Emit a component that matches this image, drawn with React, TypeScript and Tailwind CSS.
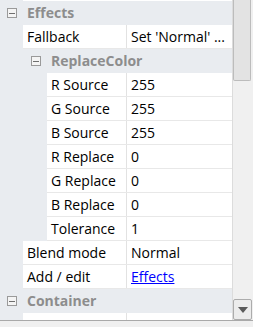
type Row =
  | { kind: 'cat'; depth: number; label: string }
  | { kind: 'prop'; depth: number; label: string; value: string; link?: boolean };

const rows: Row[] = [
  { kind: 'cat', depth: 0, label: 'Effects' },
  { kind: 'prop', depth: 1, label: 'Fallback', value: "Set 'Normal' ..." },
  { kind: 'cat', depth: 1, label: 'ReplaceColor' },
  { kind: 'prop', depth: 2, label: 'R Source', value: '255' },
  { kind: 'prop', depth: 2, label: 'G Source', value: '255' },
  { kind: 'prop', depth: 2, label: 'B Source', value: '255' },
  { kind: 'prop', depth: 2, label: 'R Replace', value: '0' },
  { kind: 'prop', depth: 2, label: 'G Replace', value: '0' },
  { kind: 'prop', depth: 2, label: 'B Replace', value: '0' },
  { kind: 'prop', depth: 2, label: 'Tolerance', value: '1' },
  { kind: 'prop', depth: 1, label: 'Blend mode', value: 'Normal' },
  { kind: 'prop', depth: 1, label: 'Add / edit', value: 'Effects', link: true },
  { kind: 'cat', depth: 0, label: 'Container' },
  { kind: 'prop', depth: 1, label: 'Name', value: 'Container', link: true },
];

const indent = ['w-0', 'w-[23px]', 'w-[47px]'];
const boxOffset = ['pl-[7px]', 'pl-[31px]'];

function CollapseBox() {
  return (
    <span className="flex h-[10px] w-[10px] shrink-0 items-center justify-center border border-[#9a9a9a] bg-[#f4f4f4]">
      <span className="h-px w-[6px] bg-[#6f6f6f]" />
    </span>
  );
}

function GridRow({ row }: { row: Row }) {
  if (row.kind === 'cat') {
    return (
      <div className={`flex h-[24px] shrink-0 items-center ${boxOffset[row.depth]}`}>
        <CollapseBox />
        <span className="ml-[10px] whitespace-nowrap font-bold text-[#8d8d8d]">{row.label}</span>
      </div>
    );
  }
  return (
    <div className="flex h-[24px] shrink-0">
      <div className={`${indent[row.depth]} shrink-0`} />
      <div className="flex min-w-0 flex-1 border-b border-[#e8e8e8] bg-white">
        <div className="flex min-w-0 flex-1 items-center overflow-hidden whitespace-nowrap pl-[4px] text-black">
          {row.label}
        </div>
        <div className="flex w-[106px] shrink-0 items-center overflow-hidden whitespace-nowrap border-l border-[#e2e2e2] pl-[4px]">
          {row.link ? (
            <span className="text-[#0000ff] underline">{row.value}</span>
          ) : (
            <span className="text-black">{row.value}</span>
          )}
        </div>
      </div>
    </div>
  );
}

export default function App() {
  return (
    <div
      className="flex h-[327px] w-[253px] flex-col overflow-hidden bg-[#f0f0f0] text-[14px] leading-none"
      style={{ fontFamily: '"Open Sans", "Noto Sans", sans-serif' }}
    >
      <div className="flex h-[321px] shrink-0 border-b border-[#a9a9a9]">
        <div className="flex w-[232px] shrink-0 flex-col overflow-hidden bg-[#e9ecf0]">
          <div className="flex h-[1px] shrink-0">
            <div className="w-[23px] shrink-0" />
            <div className="flex-1 bg-white" />
          </div>
          {rows.map((row, i) => (
            <GridRow key={i} row={row} />
          ))}
        </div>
        <div className="flex w-[21px] shrink-0 flex-col justify-between border-l border-[#dcdcdc] bg-[#f0f0f0] pr-[2px]">
          <div className="h-[81px] w-[18px] rounded-b-[2px] border border-t-0 border-[#bcbcbc] bg-[#e3e3e3]" />
          <div className="flex h-[21px] w-[19px] items-center justify-center rounded-[2px] border border-[#acacac] bg-[#ececec]">
            <svg width="10" height="6" viewBox="0 0 10 6">
              <path d="M0 0 H10 L5 6 Z" fill="#5a5a5a" />
            </svg>
          </div>
        </div>
      </div>
      <div className="flex-1 bg-[#f0f0f0]" />
    </div>
  );
}
